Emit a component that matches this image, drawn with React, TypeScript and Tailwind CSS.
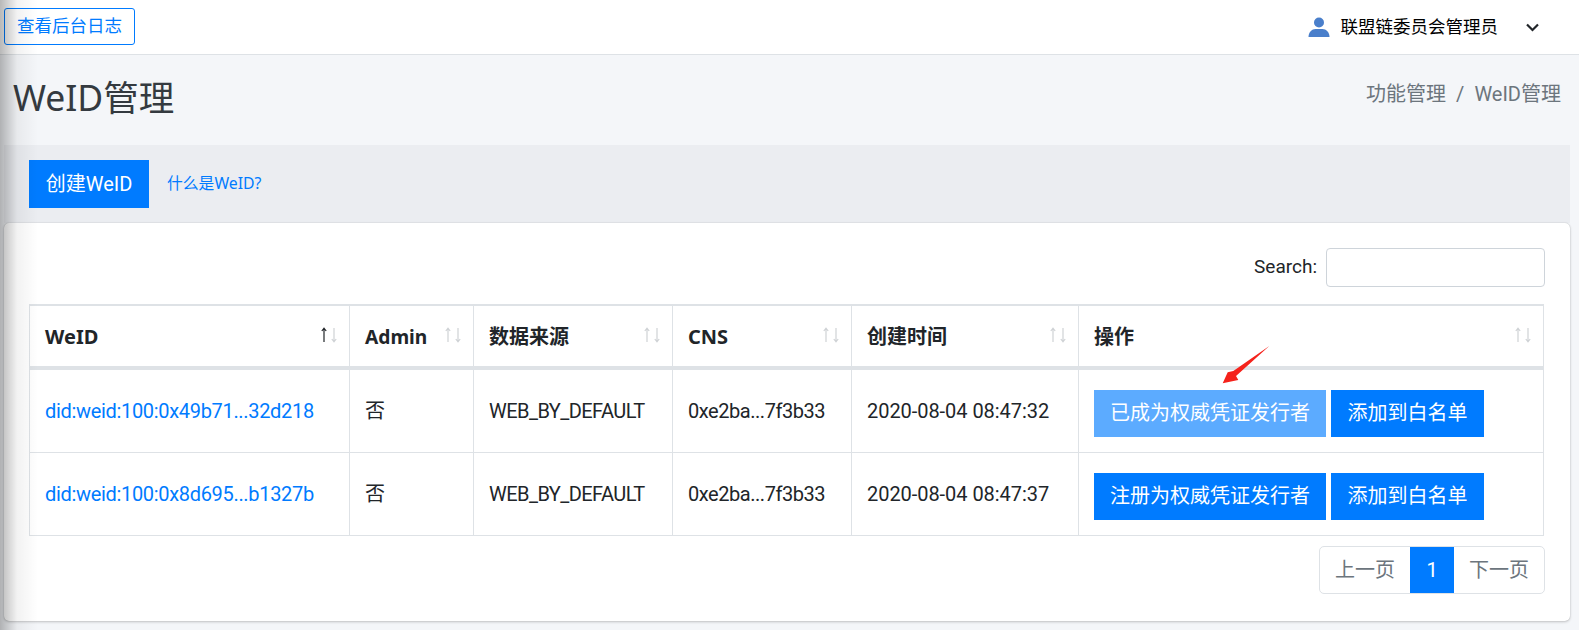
const font = "font-['Roboto','Noto_Sans_CJK_SC',sans-serif]";
const wideFont = "font-['Noto_Sans','Noto_Sans_CJK_SC',sans-serif]";

function SortArrows({ active }: { active?: boolean }) {
  return (
    <svg width="18" height="16" viewBox="0 0 18 16" className="absolute right-[11px] top-[21px]" fill="none" strokeWidth="1.2">
      <path d="M4 15V1.5M1.8 4L4 1.2L6.2 4" stroke={active ? "#212529" : "#cfd2d5"} />
      <path d="M14 1V14.5M11.8 12L14 14.8L16.2 12" stroke="#cfd2d5" />
    </svg>
  );
}

const columns = [
  { label: "WeID", width: "w-[320px] text-[20px]", active: true },
  { label: "Admin", width: "w-[124px] text-[19.2px]" },
  { label: "数据来源", width: "w-[199px] text-[20px]" },
  { label: "CNS", width: "w-[179px] text-[20px]" },
  { label: "创建时间", width: "w-[227px] text-[20px]" },
  { label: "操作", width: "text-[20px]" },
];

const rows = [
  { weid: "did:weid:100:0x49b71...32d218", time: "2020-08-04 08:47:32", issuer: "已成为权威凭证发行者", done: true },
  { weid: "did:weid:100:0x8d695...b1327b", time: "2020-08-04 08:47:37", issuer: "注册为权威凭证发行者", done: false },
];

export default function App() {
  return (
    <div className={`relative h-[630px] overflow-hidden bg-[#f4f6f9] text-[20px] text-[#212529] ${font}`}>
      {/* sidebar shadow falling over the page */}
      <div className="pointer-events-none absolute inset-y-0 left-0 z-10 w-[38px] bg-gradient-to-r from-[#00000047] via-[#0000000d] via-[45%] to-transparent" />

      <header className="flex h-[55px] items-center justify-between border-b border-[#dee2e6] bg-white pr-[40px] pl-[4px]">
        <button className="mb-[1px] h-[37px] w-[131px] rounded-[3px] border border-[#007bff] text-[17.5px] text-[#007bff]">查看后台日志</button>
        <div className="flex items-center text-[17.5px] text-black">
          <svg width="22" height="20" viewBox="0 0 22 20" fill="#4a7fcb" className="mr-[11px]">
            <circle cx="11" cy="5.5" r="5" />
            <path d="M0.5 20c0-5 3.5-8 7-8h7c3.5 0 7 3 7 8z" />
          </svg>
          <span>联盟链委员会管理员</span>
          <svg width="13" height="9" viewBox="0 0 13 9" fill="none" stroke="#212529" strokeWidth="2.2" className="ml-[28px]">
            <path d="M1 1.5l5.5 5.5l5.5-5.5" />
          </svg>
        </div>
      </header>

      <div className="flex h-[90px] items-start justify-between pt-[16px] pr-[18px] pl-[13px]">
        <h1 className={`text-[35.5px] leading-[52px] text-[#343a40] ${wideFont}`}>WeID管理</h1>
        <div className="mt-[8px] flex gap-[10px] text-[20px] leading-[30px] text-[#6c757d]">
          <span>功能管理</span>
          <span>/</span>
          <span>WeID管理</span>
        </div>
      </div>

      <div className="mr-[9px] ml-[4px]">
        <div className="flex h-[78px] items-start bg-[#ebedf1] pt-[15px] pl-[25px]">
          <button className="h-[48px] w-[120px] bg-[#007bff] text-[20px] text-white">创建WeID</button>
          <a className={`mt-[11px] ml-[18px] text-[15.8px] leading-[24px] text-[#007bff] ${wideFont}`}>什么是WeID?</a>
        </div>

        <div className="h-[398px] rounded-[5px] bg-white px-[25px] pt-[25px] shadow-[0_0_1px_rgba(0,0,0,0.25),0_1px_3px_rgba(0,0,0,0.2)]">
          <div className="flex items-center justify-end gap-[9px] text-[19px]">
            <span>Search:</span>
            <input className="h-[39px] w-[219px] rounded-[4px] border border-[#ced4da] bg-white" />
          </div>

          <table className="mt-[17px] w-[1515px] table-fixed border-separate border-spacing-0 border-l border-[#dee2e6] text-left">
            <thead>
              <tr>
                {columns.map((col) => (
                  <th key={col.label} className={`relative h-[66px] border-t-2 border-r border-b-4 border-[#dee2e6] pt-[2px] pl-[15px] font-bold ${wideFont} ${col.width}`}>
                    {col.label}
                    <SortArrows active={col.active} />
                  </th>
                ))}
              </tr>
            </thead>
            <tbody>
              {rows.map((row) => (
                <tr key={row.weid}>
                  <td className="h-[83px] border-r border-b border-[#dee2e6] pl-[15px]">
                    <a className="tracking-[-0.32px] text-[#007bff]">{row.weid}</a>
                  </td>
                  <td className="border-r border-b border-[#dee2e6] pl-[15px]">否</td>
                  <td className="border-r border-b border-[#dee2e6] pl-[15px] tracking-[-0.55px]">WEB_BY_DEFAULT</td>
                  <td className="border-r border-b border-[#dee2e6] pl-[15px] tracking-[-0.45px]">0xe2ba...7f3b33</td>
                  <td className="border-r border-b border-[#dee2e6] pl-[15px] tracking-[-0.05px]">{row.time}</td>
                  <td className="border-r border-b border-[#dee2e6] pl-[15px]">
                    <div className="mt-[4px] flex gap-[5px]">
                      <button className={`h-[47px] w-[232px] text-white ${row.done ? "bg-[#5cabff]" : "bg-[#007bff]"}`}>{row.issuer}</button>
                      <button className="h-[47px] w-[153px] bg-[#007bff] text-white">添加到白名单</button>
                    </div>
                  </td>
                </tr>
              ))}
            </tbody>
          </table>

          <div className="mt-[10px] flex justify-end">
            <div className="flex h-[48px] w-[226px] items-center overflow-hidden rounded-[5px] border border-[#dee2e6] text-[#6c757d]">
              <span className="w-[90px] text-center">上一页</span>
              <span className="flex h-[48px] w-[44px] items-center justify-center bg-[#007bff] text-white">1</span>
              <span className="flex-1 text-center">下一页</span>
            </div>
          </div>
        </div>
      </div>

      {/* red annotation arrow */}
      <svg width="50" height="40" viewBox="0 0 50 40" className="absolute top-[345px] left-[1222px] z-20">
        <path d="M47.3 1L11.3 26L5.7 27.3L0.7 38.3L16.3 35L14 31z" fill="#f5221b" />
      </svg>
    </div>
  );
}
